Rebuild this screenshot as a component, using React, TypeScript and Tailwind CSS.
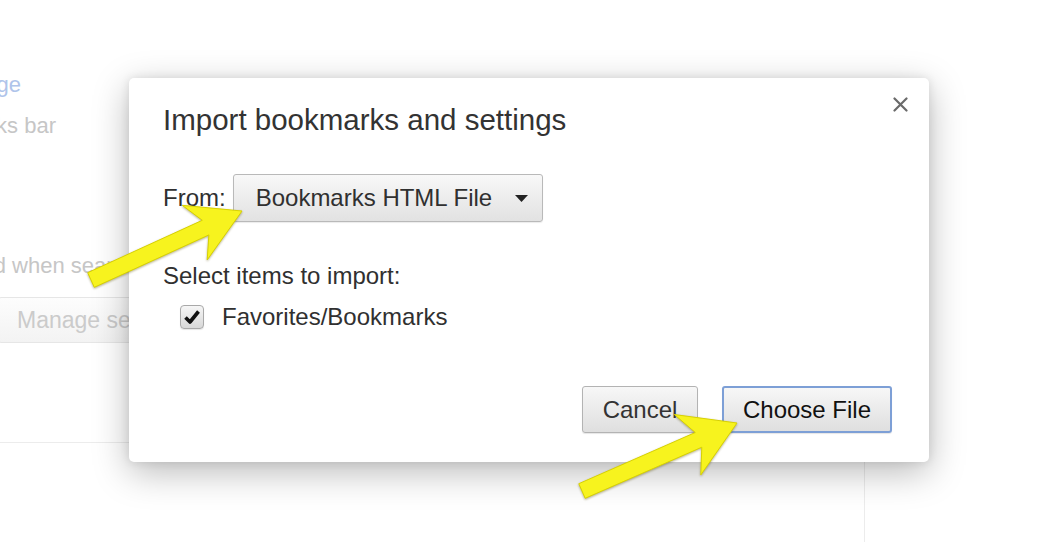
type Pt = [number, number];

function arrowPoints(tail: Pt, tip: Pt, headLen: number, sweep: number, half: number, shaft: number) {
    const dx = tip[0] - tail[0];
    const dy = tip[1] - tail[1];
    const len = Math.hypot(dx, dy);
    const u: Pt = [dx / len, dy / len];
    const n: Pt = [-u[1], u[0]];
    const at = (d: number, s: number): Pt => [tip[0] - u[0] * d + n[0] * s, tip[1] - u[1] * d + n[1] * s];
    const pts: Pt[] = [
        [tail[0] + n[0] * shaft, tail[1] + n[1] * shaft],
        at(headLen, shaft),
        at(headLen + sweep, half),
        tip,
        at(headLen + sweep, -half),
        at(headLen, -shaft),
        [tail[0] - n[0] * shaft, tail[1] - n[1] * shaft],
    ];
    return pts.map((p) => `${p[0].toFixed(1)},${p[1].toFixed(1)}`).join(" ");
}

function Arrows() {
    return (
        <svg
            className="pointer-events-none absolute inset-0 drop-shadow-[0_1px_1px_rgba(90,80,0,0.45)]"
            width="1051"
            height="542"
            viewBox="0 0 1051 542"
        >
            <polygon
                points={arrowPoints([91, 280], [242, 211], 40, 12, 30, 8)}
                fill="#f7f31e"
                stroke="#d8d200"
                strokeWidth="1"
                strokeLinejoin="round"
            />
            <polygon
                points={arrowPoints([582, 491], [737, 423], 42, 12, 33, 8)}
                fill="#f7f31e"
                stroke="#d8d200"
                strokeWidth="1"
                strokeLinejoin="round"
            />
        </svg>
    );
}

function ImportDialog() {
    return (
        <div className="absolute left-[129px] top-[78px] flex h-[384px] w-[800px] flex-col rounded-[5px] bg-white pl-[34px] pr-[37px] pt-[25px] shadow-[0_10px_36px_rgba(0,0,0,0.28),0_0_10px_rgba(0,0,0,0.1)]">
            <button className="absolute right-[21px] top-[19px] flex h-[15px] w-[15px] items-center justify-center">
                <svg width="15" height="15" viewBox="0 0 15 15">
                    <path d="M1.5 1.5 L13.5 13.5 M13.5 1.5 L1.5 13.5" stroke="#6a6a6a" strokeWidth="2.2" strokeLinecap="round" />
                </svg>
            </button>

            <h1 className="h-[34px] text-[29.5px] leading-[34px] text-[#333]">Import bookmarks and settings</h1>

            <div className="mt-[37px] flex h-[48px] items-center gap-[7px] text-[24px] leading-[28px] text-[#303030]">
                <span>From:</span>
                <div className="flex h-[48px] w-[310px] items-center justify-between rounded-[3px] border border-[#b9b9b9] bg-linear-to-b from-[#f8f8f8] to-[#e2e2e2] pl-[22px] pr-[14px] shadow-[0_1px_1px_rgba(0,0,0,0.08)]">
                    <span>Bookmarks HTML File</span>
                    <svg width="13" height="7" viewBox="0 0 13 7">
                        <polygon points="0,0 13,0 6.5,7" fill="#222" />
                    </svg>
                </div>
            </div>

            <p className="mt-[40px] h-[28px] text-[24px] leading-[28px] text-[#303030]">Select items to import:</p>

            <label className="ml-[17px] mt-[13px] flex h-[28px] items-center gap-[18px] text-[24px] leading-[28px] text-[#303030]">
                <span className="flex h-[24px] w-[24px] items-center justify-center rounded-[4px] border border-[#a9a9a9] bg-linear-to-b from-[#f6f6f6] to-[#d8d8d8] shadow-[0_1px_1px_rgba(0,0,0,0.1)]">
                    <svg width="20" height="20" viewBox="0 0 20 20">
                        <path d="M3.5 10.5 L8 15 L16.5 4.5" fill="none" stroke="#111" strokeWidth="3.6" strokeLinejoin="round" />
                    </svg>
                </span>
                <span>Favorites/Bookmarks</span>
            </label>

            <div className="mt-[55px] flex justify-end gap-[24px] text-[24px] leading-[28px]">
                <button className="flex h-[47px] w-[116px] items-center justify-center rounded-[3px] border border-[#b3b3b3] bg-linear-to-b from-[#f7f7f7] to-[#dfdfdf] text-[#333] shadow-[0_1px_1px_rgba(0,0,0,0.1)]">
                    Cancel
                </button>
                <button className="flex h-[47px] w-[170px] items-center justify-center rounded-[3px] border-2 border-[#7d9fd6] bg-linear-to-b from-[#f7f7f7] to-[#dfdfdf] text-[#111] shadow-[0_1px_1px_rgba(0,0,0,0.1)]">
                    Choose File
                </button>
            </div>
        </div>
    );
}

export default function App() {
    return (
        <div className="relative h-[542px] w-[1051px] overflow-hidden bg-white font-['Liberation_Sans',Arial,sans-serif]">
            <div className="flex h-full w-[865px] flex-col pt-[71px] text-[22px] leading-[28px] text-[#c6c6c6]">
                <div className="flex w-[21px] justify-end whitespace-nowrap text-[#afc4ea]">Change</div>
                <div className="mt-[13px] flex w-[56px] justify-end whitespace-nowrap">Always show the bookmarks bar</div>
                <div className="mt-[112px] flex whitespace-nowrap">
                    <div className="flex w-[6px] justify-end">Search engine used</div>
                    <span>&nbsp;when searching from the omnibox.</span>
                </div>
                <div className="-ml-[2px] mt-[17px] flex h-[46px] w-[330px] items-center whitespace-nowrap rounded-[3px] border border-[#e6e6e6] bg-linear-to-b from-[#fdfdfd] to-[#f3f3f3] pl-[18px] text-[23px] text-[#cbcbcb]">
                    Manage search engines...
                </div>
                <div className="mt-[99px] flex-1 border-r border-t border-[#ececec]" />
            </div>

            <ImportDialog />
            <Arrows />
        </div>
    );
}
